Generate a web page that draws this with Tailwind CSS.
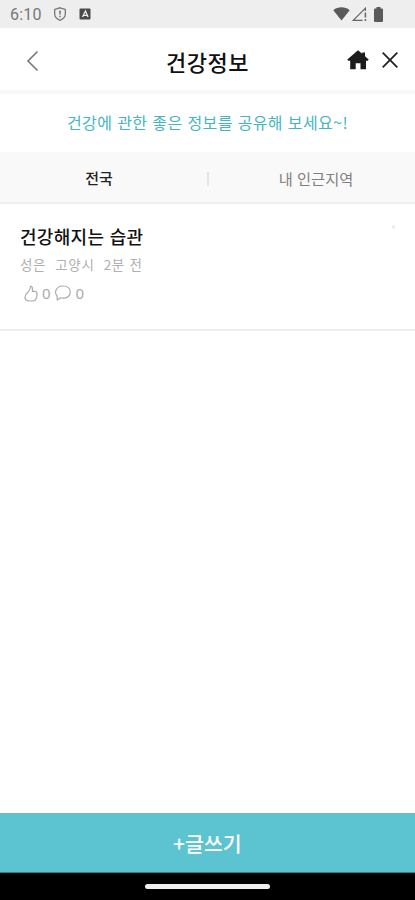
<!DOCTYPE html>
<html lang="ko">
<head>
<meta charset="utf-8">
<meta name="viewport" content="width=device-width, initial-scale=1">
<title>건강정보</title>
<script src="https://cdn.jsdelivr.net/npm/@tailwindcss/browser@4"></script>
</head>
<body class="bg-white">
<div class="flex h-[900px] w-[415px] flex-col overflow-hidden bg-white font-['Noto_Sans_CJK_KR',sans-serif] whitespace-nowrap">
  <div class="flex h-7 shrink-0 items-center bg-[#eeeeee] pl-[10px] text-[#777]">
    <span class="w-[43px] pt-0.5 font-[Roboto,sans-serif] text-[16px] leading-7 tracking-[0.2px]">6:10</span>
    <svg class="h-[14px] w-[14px]" viewBox="0 0 14 14" fill="none" stroke="currentColor" stroke-width="1.3"><path d="M7 .8 12.300 2.500V7c0 3-2.200 5-5.300 6.300C3.900 12 1.700 10 1.700 7V2.500Z"/><path d="M7 3.500v4M7 8.800v1.500" stroke-width="1.600"/></svg>
    <svg class="ml-3 h-[12px] w-[12px]" viewBox="0 0 12 12"><rect x=".5" y=".5" width="11" height="11" rx="1" fill="#4a4a4a"/><path d="m3.500 9 3-6 2.500 6M4.500 7.300h4" fill="none" stroke="#eee" stroke-width="1.300"/></svg>
    <svg class="ml-[242px] h-[14px] w-[17px]" viewBox="0 0 17 14"><path d="M.3 3.200C5-.6 12-.6 16.700 3.200L8.500 13.500Z" fill="#5a5a5a"/></svg>
    <svg class="ml-[2px] h-[15px] w-[15px]" viewBox="0 0 15 15" fill="none" stroke="#666" stroke-width="1.200"><path d="M10.500 13.300H1.300L13.400 1.200V4"/><path d="M13.400 5.500v5M13.400 12v2" stroke-width="1.500"/></svg>
    <svg class="ml-[6px] h-[15px] w-[11px]" viewBox="0 0 11 15"><path d="M3.500 0h4v1.500H9q1 0 1 1V14q0 1-1 1H2q-1 0-1-1V2.500q0-1 1-1h1.500Z" fill="#5a5a5a"/></svg>
  </div>
  <header class="grid h-[62px] shrink-0 grid-cols-[1fr_auto_1fr] items-center">
    <svg class="mt-1 ml-[26px] h-[22px] w-[13px]" viewBox="0 0 13 22" fill="none" stroke="#777" stroke-width="1.600"><path d="M11.500 1.500 2 11l9.500 9.500"/></svg>
    <h1 class="pt-[3px] text-[22px] leading-8 font-medium tracking-[0.500px] text-[#111]">건강정보</h1>
    <div class="mt-[2px] flex items-center justify-end pr-[17px]">
      <svg class="h-[20px] w-[22px]" viewBox="0 0 22 20"><path d="M11 .3 15.200 3.800V2.500h2.800v3.700L21.700 9.500 20.800 10.800H19V19.300H13.500V13.300H8.700v6H3.200V10.800H1.200L.3 9.500Z" fill="#1c1c1c"/></svg>
      <svg class="ml-[13px] h-[16px] w-[16px]" viewBox="0 0 16 16" fill="none" stroke="#222" stroke-width="1.800"><path d="m.7.7 14.600 14.600M15.300.7.7 15.300"/></svg>
    </div>
  </header>
  <div class="h-[4px] shrink-0 bg-[#f8f8f8]"></div>
  <p class="h-[58px] shrink-0 text-center text-[16px] leading-[57px] tracking-[0.400px] text-[#45b5c4]">건강에 관한 좋은 정보를 공유해 보세요~!</p>
  <nav class="flex h-[52px] shrink-0 items-center border-b-2 border-[#eeeeee] bg-[#f9f9f9] pt-[3px] text-[15px]">
    <span class="w-[198px] text-center font-medium text-[#222]">전국</span>
    <span class="ml-[9px] h-[14px] w-[2px] bg-[#e5e5e5]"></span>
    <span class="ml-[9px] w-[196px] text-center text-[15.300px] text-[#808080]">내 인근지역</span>
  </nav>
  <article class="flex h-[127px] shrink-0 justify-between border-b-2 border-[#eeeeee] pt-[18px] pr-5 pl-5">
    <div>
      <h2 class="text-[18px] leading-[28px] font-medium tracking-[0.300px] text-[#111]">건강해지는 습관</h2>
      <div class="flex gap-[9px] text-[13.500px] leading-7 tracking-[0.700px] text-[#b0b0b0]"><span>성은</span><span>고양시</span><span>2분 전</span></div>
      <div class="mt-px flex h-7 items-center pl-1 text-[15px] leading-7 text-[#aaa]">
        <svg class="h-[17px] w-[14px]" viewBox="0 0 14 17" fill="none" stroke="#aaa" stroke-width="1.200" stroke-linejoin="round"><path d="M6.800 1c1.600.3 2 2 1.500 5.300h2.800c1.400 0 2 1.200 1.600 2.300.6.900.5 1.800 0 2.500.2 1-.1 1.800-.7 2.400-.3 1.800-1.700 2.500-3.200 2.500H5.300c-2.400 0-4.300-1.500-4.300-3.800 0-2 1-3.300 2.700-4.700C5.500 5.800 6.300 4 6.800 1Z"/></svg>
        <span class="ml-1 font-['Noto_Sans',sans-serif]">0</span>
        <svg class="ml-[3px] h-[16px] w-[18px]" viewBox="0 0 18 16" fill="none" stroke="#aaa" stroke-width="1.200" stroke-linejoin="round"><path d="M3.300 15 3 11C-.3 7 2.500 1 9 1c4.700 0 7.300 2.700 7.300 6.100S13.500 13.200 9 13.200c-1 0-1.700-.1-2.500-.4Z"/></svg>
        <span class="ml-[4px] font-['Noto_Sans',sans-serif]">0</span>
      </div>
    </div>
    <span class="mt-[3px] h-[4px] w-[3px] rounded-full bg-[#eeeeee]"></span>
  </article>
  <main class="flex-1"></main>
  <button class="h-[60px] shrink-0 border-b border-[#357f88] bg-[#5cc4d1] pt-px text-[20.500px] leading-[58px] font-medium text-white">+글쓰기</button>
  <div class="flex h-[27px] shrink-0 justify-center bg-black pt-[11px]"><span class="h-[5px] w-[125px] rounded-full bg-[#eeeeee]"></span></div>
</div>
</body>
</html>
